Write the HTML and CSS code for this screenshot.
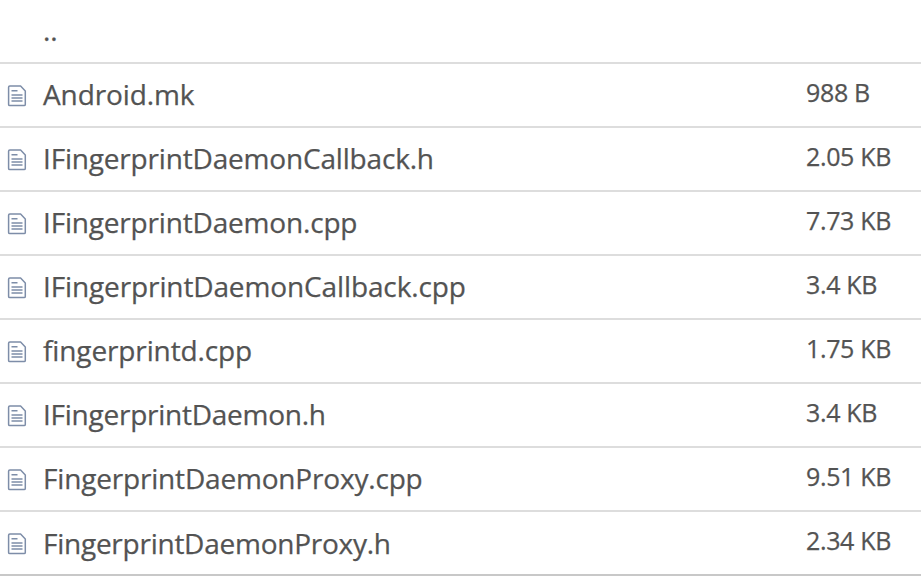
FILE: index.html
```html
<!DOCTYPE html>
<html lang="en"><head><meta charset="utf-8"><title>Files</title><link rel="stylesheet" href="styles.css"></head>
<body>
<svg class="defs"><symbol id="file" viewBox="0 0 20 22"><path d="M2.8 1.1h10.8l4.7 4.8v13.5q0 1.2-1.2 1.2h-14.3q-1.2 0-1.2-1.2v-17.1q0-1.2 1.2-1.2z M4.5 5.8h6 M4.5 10h11 M4.5 13h11 M4.5 16h11" fill="none" stroke="#7d8da8" stroke-width="1.5" stroke-linejoin="round"/></symbol></svg>
<ul class="files">
<li class="row parent"><a class="name">..</a></li>
<li class="row"><svg class="icon"><use href="#file"/></svg><a class="name short">Android.mk</a><span class="size">988 B</span></li>
<li class="row"><svg class="icon"><use href="#file"/></svg><a class="name">IFingerprintDaemonCallback.h</a><span class="size">2.05 KB</span></li>
<li class="row"><svg class="icon"><use href="#file"/></svg><a class="name">IFingerprintDaemon.cpp</a><span class="size">7.73 KB</span></li>
<li class="row"><svg class="icon"><use href="#file"/></svg><a class="name loose">IFingerprintDaemonCallback.cpp</a><span class="size">3.4 KB</span></li>
<li class="row"><svg class="icon"><use href="#file"/></svg><a class="name loose">fingerprintd.cpp</a><span class="size">1.75 KB</span></li>
<li class="row"><svg class="icon"><use href="#file"/></svg><a class="name tight">IFingerprintDaemon.h</a><span class="size">3.4 KB</span></li>
<li class="row"><svg class="icon"><use href="#file"/></svg><a class="name">FingerprintDaemonProxy.cpp</a><span class="size">9.51 KB</span></li>
<li class="row"><svg class="icon"><use href="#file"/></svg><a class="name tight">FingerprintDaemonProxy.h</a><span class="size">2.34 KB</span></li>
</ul>
</body></html>
```
FILE: styles.css
```css
body{margin:0;background:#fff;color:#535353;font-family:"Open Sans","Noto Sans",sans-serif;-webkit-text-stroke:.25px #535353}
.defs{display:none}
.files{list-style:none;margin:0;padding:0}
.row{box-sizing:border-box;display:flex;align-items:center;height:64px;padding:0 0 0 7px;border-bottom:2px solid #ddd}
.row:last-child{border-bottom-color:#c8c8c8}
.row.parent{padding-left:43px}
.icon{width:20px;height:22px;margin:2px 16px 0 0;flex:none}
.name{font-size:28px;letter-spacing:-.18px;width:763px;white-space:nowrap;padding-bottom:2px}
.short{letter-spacing:-.12px}
.loose{letter-spacing:-.12px}
.tight{letter-spacing:-.25px}
.size{font-size:25px;letter-spacing:-.35px;white-space:nowrap;padding-bottom:7px}
.row:last-child .name{padding-bottom:0}
```
